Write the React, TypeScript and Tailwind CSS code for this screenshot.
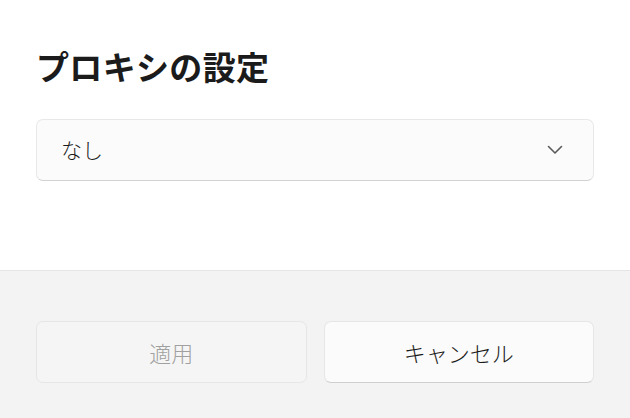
export default function App() {
  const font = { fontFamily: '"Noto Sans CJK JP", "Noto Sans", sans-serif' };
  return (
    <div className="w-[630px] h-[418px] flex flex-col bg-white text-[#1b1b1b]" style={font}>
      {/* Body */}
      <div className="h-[270px] px-[36px] pt-[44px]">
        <h1 className="text-[33px] leading-[44px] font-bold tracking-[0.01em]">プロキシの設定</h1>
        <button className="mt-[31px] w-[558px] h-[62px] flex items-center justify-between pl-[24px] pr-[30px] rounded-[7px] bg-[#fbfbfb] border border-[#e8e8e8] border-b-[#d2d2d2]">
          <span className="text-[21px] font-light">なし</span>
          <svg width="16" height="10" viewBox="0 0 16 10" fill="none">
            <path d="M1.5 1.5 L8 8 L14.5 1.5" stroke="#5a5a5a" strokeWidth="1.6" strokeLinecap="round" strokeLinejoin="round" />
          </svg>
        </button>
      </div>

      {/* Footer */}
      <div className="flex-1 bg-[#f3f3f3] border-t border-[#e5e5e5] px-[36px] pt-[50px]">
        <div className="flex gap-[17px]">
          <button disabled className="flex-1 h-[62px] rounded-[7px] bg-[#f5f5f5] border border-[#e6e6e6] text-[#a0a0a0] text-[22px] font-light">
            適用
          </button>
          <button className="flex-1 h-[62px] rounded-[7px] bg-[#fbfbfb] border border-[#e6e6e6] border-b-[#cfcfcf] text-[#1b1b1b] text-[22px] font-light">
            キャンセル
          </button>
        </div>
      </div>
    </div>
  );
}
